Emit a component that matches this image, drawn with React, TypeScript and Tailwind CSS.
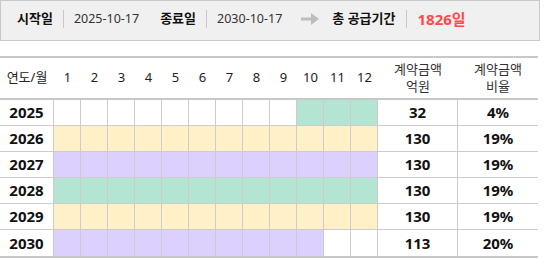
const rows = [
  { year: 2025, fill: Array(12).fill(0).map((_, i) => (i >= 9 ? "g" : "")), amount: 32, ratio: "4%" },
  { year: 2026, fill: Array(12).fill("y"), amount: 130, ratio: "19%" },
  { year: 2027, fill: Array(12).fill("p"), amount: 130, ratio: "19%" },
  { year: 2028, fill: Array(12).fill("g"), amount: 130, ratio: "19%" },
  { year: 2029, fill: Array(12).fill("y"), amount: 130, ratio: "19%" },
  { year: 2030, fill: Array(12).fill(0).map((_, i) => (i < 10 ? "p" : "")), amount: 113, ratio: "20%" },
];

const fillClass: Record<string, string> = {
  y: "bg-[#fff0c8]",
  p: "bg-[#dcd0fe]",
  g: "bg-[#b4e5d3]",
  "": "bg-white",
};

const cols = "grid grid-cols-[54px_repeat(12,27px)_80px_80px]";

function Divider() {
  return <span className="mx-[10px] h-[18px] w-px bg-[#c8c8c8]" />;
}

export default function App() {
  return (
    <div className="h-[264px] w-[550px] bg-white text-[#222] [font-family:'Noto_Sans','Noto_Sans_CJK_KR',sans-serif]">
      <div className="flex h-[41px] w-[540px] items-center border border-[#c8c8c8] bg-[#f0f0f0] pb-[3px] pl-[16px] text-[12.5px]">
        <b className="text-[13px] font-bold text-[#111]">시작일</b>
        <Divider />
        <span className="text-[#333]">2025-10-17</span>
        <b className="ml-[21px] text-[13px] font-bold text-[#111]">종료일</b>
        <Divider />
        <span className="text-[#333]">2030-10-17</span>
        <svg className="ml-[19px] mr-[13px]" width="18" height="14" viewBox="0 0 18 14">
          <rect x="0" y="5.5" width="11" height="3" fill="#bdbdbd" />
          <path d="M10 1 L18 7 L10 13 Z" fill="#bdbdbd" />
        </svg>
        <b className="text-[13px] font-bold text-[#111]">총 공급기간</b>
        <Divider />
        <b className="ml-[1px] text-[15px] font-bold text-[#ff4a4a]">1826일</b>
      </div>

      <div className="mt-[15px] w-[538px] border-y-2 border-[#c8c8c8]">
        <div className={`${cols} h-[42px] items-center border-b-2 border-[#c8c8c8] text-[13px]`}>
          <span className="text-center">연도/월</span>
          {Array.from({ length: 12 }, (_, i) => (
            <span key={i} className="text-center">
              {i + 1}
            </span>
          ))}
          <span className="flex flex-col items-center text-[#333]">
            <span className="leading-[17px]">계약금액</span>
            <span className="leading-[17px]">억원</span>
          </span>
          <span className="flex flex-col items-center text-[#333]">
            <span className="leading-[17px]">계약금액</span>
            <span className="leading-[17px]">비율</span>
          </span>
        </div>
        {rows.map((r, ri) => (
          <div
            key={r.year}
            className={`${cols} h-[26px] text-[15px] font-bold text-[#111] ${ri < rows.length - 1 ? "border-b border-[#cccccc]" : "h-[25px]"}`}
          >
            <span className="flex items-center justify-center border-r border-[#cccccc]">{r.year}</span>
            {r.fill.map((f, i) => (
              <span key={i} className={`border-r border-[#cccccc] ${fillClass[f]}`} />
            ))}
            <span className="flex items-center justify-center border-r border-[#cccccc]">{r.amount}</span>
            <span className="flex items-center justify-center">{r.ratio}</span>
          </div>
        ))}
      </div>
    </div>
  );
}
